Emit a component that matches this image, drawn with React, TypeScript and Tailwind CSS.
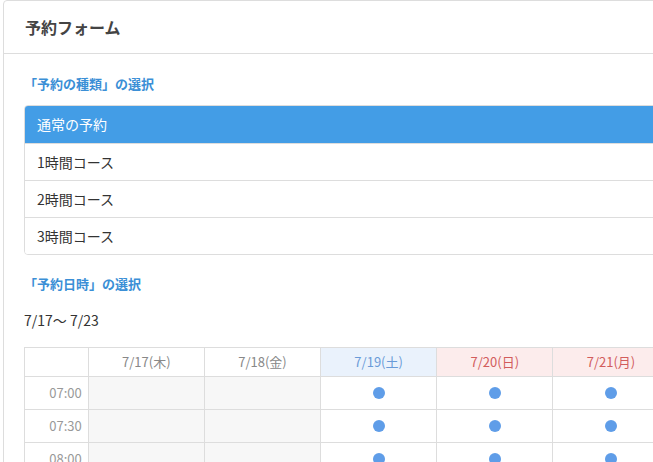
import React from "react";

const COURSES = ["通常の予約", "1時間コース", "2時間コース", "3時間コース"];

type Day = { label: string; kind: "past" | "sat" | "holiday" | "normal" };

const DAYS: Day[] = [
  { label: "7/17(木)", kind: "past" },
  { label: "7/18(金)", kind: "past" },
  { label: "7/19(土)", kind: "sat" },
  { label: "7/20(日)", kind: "holiday" },
  { label: "7/21(月)", kind: "holiday" },
  { label: "7/22(火)", kind: "normal" },
  { label: "7/23(水)", kind: "normal" },
];

const TIMES = ["07:00", "07:30", "08:00", "08:30", "09:00"];

const headCls = (kind: Day["kind"]) => {
  if (kind === "sat") return "bg-[#eaf2fc] text-[#6a9bd8]";
  if (kind === "holiday") return "bg-[#fcecec] text-[#d25c5c]";
  return "bg-white text-[#888]";
};

export default function App() {
  return (
    <div
      className="w-screen h-screen overflow-hidden bg-white text-[#333]"
      style={{ fontFamily: '"Noto Sans CJK JP", "Liberation Sans", sans-serif' }}
    >
      <div className="ml-[3px] w-[900px] border border-[#ddd] rounded-tl-[4px]">
        {/* Panel header */}
        <div className="h-[53px] px-[21px] flex items-center border-b border-[#ddd]">
          <h1 className="text-[16px] font-bold text-[#444]">予約フォーム</h1>
        </div>

        <div className="pl-[20px] pt-[19px]">
          <h2 className="text-[13px] font-bold text-[#3b8fd6] leading-[22px]">「予約の種類」の選択</h2>

          <div className="mt-[10px] border border-[#ddd] rounded-[4px] overflow-hidden">
            {COURSES.map((c, i) => (
              <div
                key={c}
                className={`h-[37px] flex items-center px-[12px] text-[14px] ${
                  i === 0 ? "bg-[#439de6] text-white" : "bg-white border-t border-[#ddd]"
                }`}
              >
                {c}
              </div>
            ))}
          </div>

          <h2 className="mt-[18px] text-[13px] font-bold text-[#3b8fd6] leading-[22px]">「予約日時」の選択</h2>

          <div className="mt-[15px] text-[14px] leading-[20px]">7/17～ 7/23</div>

          <table className="mt-[17px] border-collapse text-[13px]">
            <thead>
              <tr className="h-[29px]">
                <th className="w-[64px] border border-[#ddd] bg-white" />
                {DAYS.map((d) => (
                  <th
                    key={d.label}
                    className={`w-[117px] border border-[#ddd] font-normal ${headCls(d.kind)}`}
                  >
                    {d.label}
                  </th>
                ))}
              </tr>
            </thead>
            <tbody>
              {TIMES.map((t) => (
                <tr key={t} className="h-[33px]">
                  <td className="border border-[#ddd] text-right pr-[6px] text-[#999]">{t}</td>
                  {DAYS.map((d) => (
                    <td
                      key={d.label}
                      className={`border border-[#ddd] ${d.kind === "past" ? "bg-[#f7f7f7]" : "bg-white"}`}
                    >
                      {d.kind !== "past" && (
                        <div className="mx-auto w-[12px] h-[12px] rounded-full bg-[#5f9de8]" />
                      )}
                    </td>
                  ))}
                </tr>
              ))}
            </tbody>
          </table>
        </div>
      </div>
    </div>
  );
}
